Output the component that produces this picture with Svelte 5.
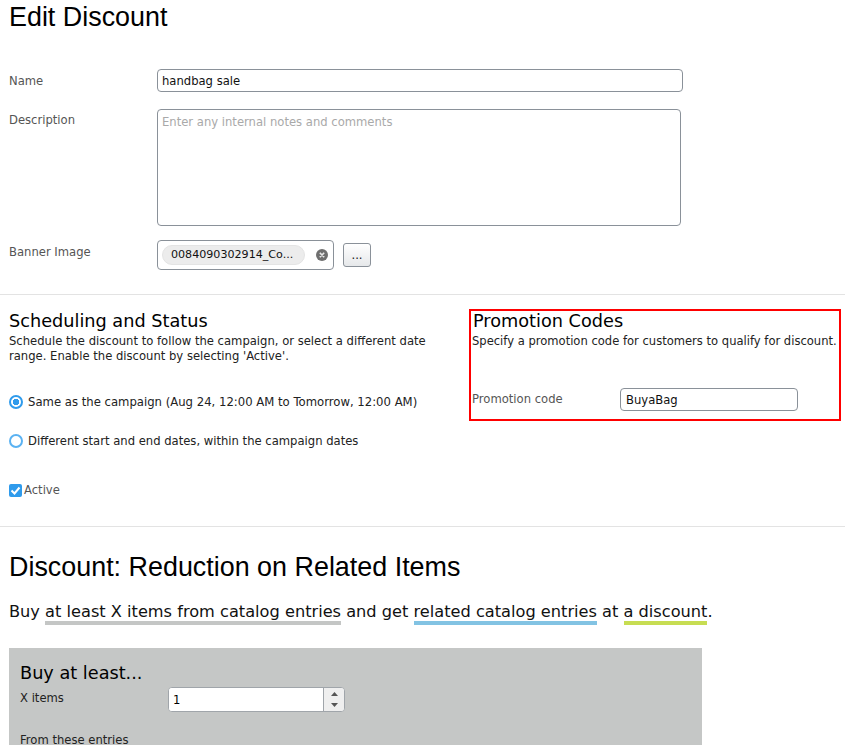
<script>
  let name = "handbag sale";
  let promo = "BuyaBag";
  let qty = 1;
  let schedule = "campaign";
  let active = true;
</script>

<div class="page">
  <h1>Edit Discount</h1>

  <div class="field name-row">
    <label class="lbl" for="name">Name</label>
    <input id="name" class="text name-input" bind:value={name} />
  </div>
  <div class="field desc-row">
    <label class="lbl" for="desc">Description</label>
    <textarea id="desc" placeholder="Enter any internal notes and comments"></textarea>
  </div>
  <div class="field banner-row">
    <span class="lbl">Banner Image</span>
    <div class="picker">
      <span class="chip">0084090302914_Co...</span>
      <svg class="remove" width="12" height="12" viewBox="0 0 12 12">
        <circle cx="6" cy="6" r="6" fill="#6f6f6f" />
        <path d="M3.8 3.8l4.4 4.4M8.2 3.8l-4.4 4.4" stroke="#e8e8e8" stroke-width="1.6" />
      </svg>
    </div>
    <button class="browse">...</button>
  </div>
</div>

<hr class="rule first" />

<div class="columns">
  <section class="schedule">
    <h2>Scheduling and Status</h2>
    <p class="help">Schedule the discount to follow the campaign, or select a different date range. Enable the discount by selecting 'Active'.</p>
    <label class="radio one">
      <input type="radio" bind:group={schedule} value="campaign" />
      <span class="dot"></span>
      Same as the campaign (Aug 24, 12:00 AM to Tomorrow, 12:00 AM)
    </label>
    <label class="radio two">
      <input type="radio" bind:group={schedule} value="custom" />
      <span class="dot"></span>
      Different start and end dates, within the campaign dates
    </label>
    <label class="check">
      <input type="checkbox" bind:checked={active} />
      <span class="box">
        <svg width="13" height="13" viewBox="0 0 13 13">
          <path d="M2.5 6.5l3 3 5-6" fill="none" stroke="#fff" stroke-width="2" />
        </svg>
      </span>
      Active
    </label>
  </section>

  <section class="promo">
    <h2>Promotion Codes</h2>
    <p class="help">Specify a promotion code for customers to qualify for discount.</p>
    <div class="promo-row">
      <label class="lbl" for="promo">Promotion code</label>
      <input id="promo" class="text promo-input" bind:value={promo} />
    </div>
  </section>
</div>

<hr class="rule second" />

<div class="page">
  <h1 class="discount">Discount: Reduction on Related Items</h1>
  <p class="sentence">
    Buy <span class="u grey">at least X items from catalog entries</span> and get
    <span class="u blue">related catalog entries</span> at
    <span class="u green">a discount</span>.
  </p>
  <div class="panel">
    <h2>Buy at least...</h2>
    <div class="qty-row">
      <label for="qty">X items</label>
      <div class="spinner">
        <input id="qty" type="text" bind:value={qty} />
        <div class="arrows">
          <svg width="7" height="4" viewBox="0 0 7 4"><path d="M3.5 0L7 4H0z" fill="#555" /></svg>
          <svg width="7" height="4" viewBox="0 0 7 4"><path d="M3.5 4L0 0h7z" fill="#555" /></svg>
        </div>
      </div>
    </div>
    <div class="entries">From these entries</div>
  </div>
</div>

<style>
  :global(body) {
    margin: 0;
    background: #fff;
    overflow: hidden;
  }
  :global(#app) {
    height: 745px;
    overflow: hidden;
    font-family: "DejaVu Sans", Verdana, sans-serif;
    font-size: 11.6px;
    color: #222;
  }
  .page {
    padding-left: 9px;
  }
  h1 {
    margin: 0;
    padding-top: 1px;
    font-family: "Liberation Sans", Arial, sans-serif;
    font-weight: 400;
    font-size: 26.9px;
    line-height: 33px;
    color: #000;
  }
  h2 {
    margin: 0 0 1px;
    font-weight: 400;
    font-size: 17.7px;
    line-height: 23px;
    color: #000;
  }
  .lbl {
    color: #555;
    flex: 0 0 148px;
  }
  .field {
    display: flex;
    align-items: flex-start;
  }
  .name-row {
    margin-top: 35px;
  }
  .name-row .lbl {
    padding-top: 5px;
  }
  .desc-row {
    margin-top: 17px;
  }
  .desc-row .lbl {
    padding-top: 4px;
  }
  .banner-row {
    margin-top: 14px;
  }
  .banner-row .lbl {
    padding-top: 5px;
  }
  .text,
  textarea,
  .picker {
    box-sizing: border-box;
    border: 1px solid #8a9199;
    border-radius: 4px;
    background: #fff;
    font: inherit;
    color: #111;
    outline: none;
  }
  .text {
    padding: 1px 4px 0;
  }
  .name-input {
    width: 526px;
    height: 23px;
  }
  textarea {
    display: block;
    width: 524px;
    height: 117px;
    padding: 5px 4px;
    resize: none;
  }
  textarea::placeholder {
    color: #a9a9a9;
    opacity: 1;
  }
  .picker {
    display: flex;
    align-items: center;
    width: 177px;
    height: 30px;
    padding-left: 4px;
  }
  .chip {
    box-sizing: border-box;
    width: 143px;
    height: 20px;
    line-height: 18px;
    padding-left: 8px;
    border: 1px solid #e4e4e4;
    border-radius: 10px;
    background: #ececec;
    font-size: 11.1px;
    white-space: nowrap;
  }
  .remove {
    margin-left: 11px;
  }
  .browse {
    box-sizing: border-box;
    width: 28px;
    height: 24px;
    margin: 3px 0 0 9px;
    padding: 0;
    border: 1px solid #8a9199;
    border-radius: 3px;
    background: linear-gradient(#fff, #e6e8ea);
    font: inherit;
    color: #222;
  }
  .rule {
    margin: 0;
    border: 0;
    border-top: 1px solid #e3e3e3;
  }
  .rule.first {
    margin-top: 24px;
  }
  .columns {
    display: flex;
    height: 231px;
    box-sizing: border-box;
    padding-top: 14px;
  }
  .schedule {
    width: 460px;
    box-sizing: border-box;
    padding: 1px 0 0 9px;
  }
  .help {
    margin: 0;
    line-height: 15px;
  }
  .schedule .help {
    width: 435px;
  }
  .radio,
  .check {
    display: flex;
    align-items: center;
  }
  .radio input,
  .check input {
    position: absolute;
    opacity: 0;
    width: 0;
    height: 0;
  }
  .dot {
    box-sizing: border-box;
    flex: none;
    width: 14px;
    height: 14px;
    margin-right: 5px;
    border: 2px solid #5ab2f2;
    border-radius: 50%;
    background: #fff;
  }
  input:checked + .dot {
    border-color: #2f9bec;
    background: radial-gradient(circle, #2f9bec 0 3px, #fff 3.5px);
  }
  .radio {
    font-size: 11.67px;
  }
  .radio.one {
    margin-top: 31px;
  }
  .radio.two {
    margin-top: 25px;
    font-size: 11.6px;
  }
  .check {
    margin-top: 35px;
    color: #555;
  }
  .box {
    display: flex;
    width: 13px;
    height: 13px;
    margin-right: 2px;
    border-radius: 2px;
    background: #2f9bec;
  }
  .promo {
    box-sizing: border-box;
    width: 372px;
    height: 112px;
    margin-left: 9px;
    padding: 0 0 0 1px;
    border: 2px solid #f00;
  }
  .promo h2 {
    margin-top: -1px;
    padding-left: 1px;
  }
  .promo .help {
    font-size: 11.55px;
    white-space: nowrap;
  }
  .promo-row {
    display: flex;
    align-items: center;
    margin-top: 39px;
  }
  .promo-row .lbl {
    padding-bottom: 2px;
  }
  .promo-input {
    width: 178px;
    height: 23px;
    padding: 0 5px;
  }
  h1.discount {
    padding-top: 24px;
  }
  .sentence {
    margin: 17px 0 0;
    font-size: 16.2px;
    line-height: 21px;
    color: #111;
  }
  .u {
    display: inline-block;
    line-height: 19px;
    border-bottom: 4px solid;
  }
  .grey {
    border-color: #c4c6c5;
  }
  .blue {
    border-color: #82c3e3;
  }
  .green {
    border-color: #c7dd52;
  }
  .panel {
    box-sizing: border-box;
    width: 693px;
    height: 200px;
    margin-top: 23px;
    padding: 14px 11px;
    background: #c5c7c6;
  }
  .qty-row {
    display: flex;
    align-items: flex-start;
    margin-top: 2px;
  }
  .qty-row label {
    flex: 0 0 148px;
    padding-top: 4px;
  }
  .spinner {
    display: flex;
    box-sizing: border-box;
    width: 177px;
    height: 25px;
    border: 1px solid #a0a5aa;
    border-radius: 4px;
    overflow: hidden;
    background: #fff;
  }
  .spinner input {
    flex: 1;
    min-width: 0;
    border: 0;
    padding: 0 4px;
    font: inherit;
    outline: none;
  }
  .arrows {
    display: flex;
    flex-direction: column;
    align-items: center;
    justify-content: center;
    gap: 7px;
    width: 20px;
    border-left: 1px solid #a0a5aa;
    background: #efefef;
  }
  .entries {
    margin-top: 21px;
  }
</style>
